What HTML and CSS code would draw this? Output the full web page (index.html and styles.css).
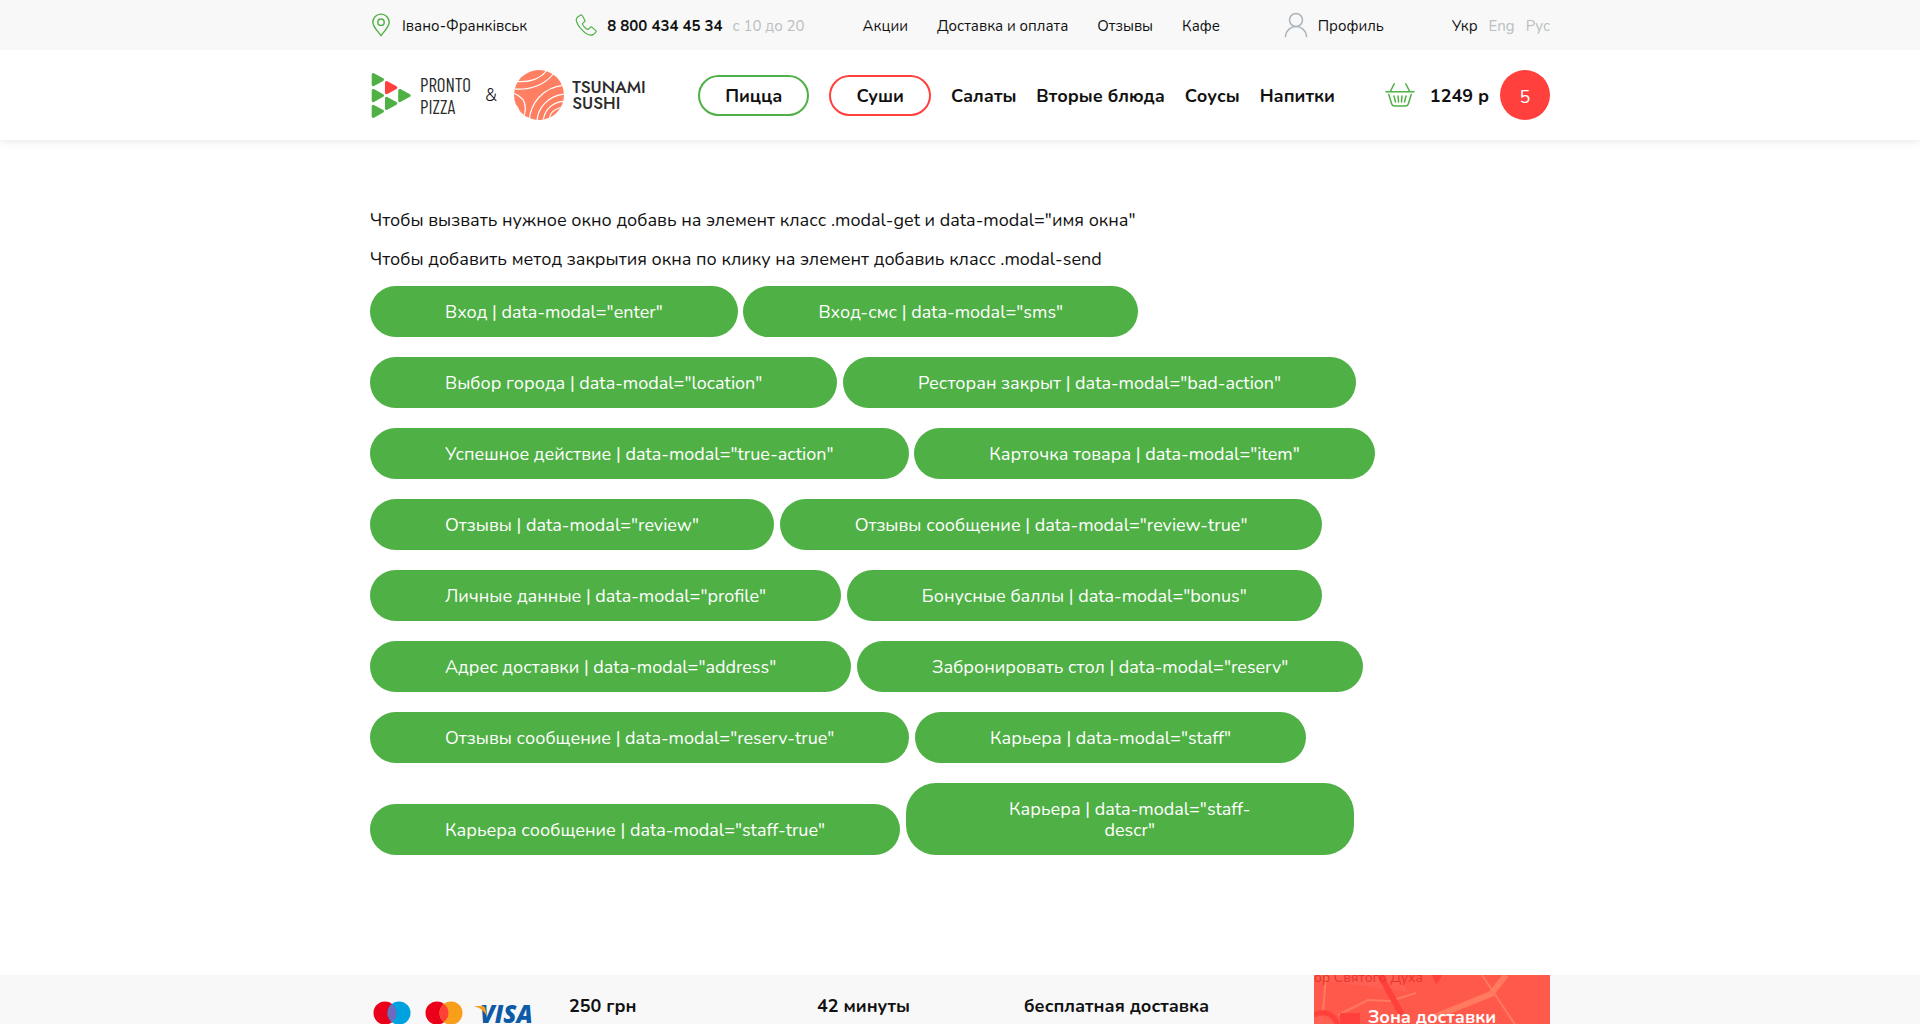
FILE: index.html
```
<!DOCTYPE html>
<html lang="ru">
<head>
<meta charset="utf-8">
<meta name="viewport" content="width=device-width, initial-scale=1">
<title>Pronto Pizza &amp; Tsunami Sushi</title>
<link rel="stylesheet" href="styles.css">
</head>
<body>
<header class="header">
  <div class="topbar">
    <div class="container topbar__row">
      <a class="topbar__item city" href="#">
        <svg width="22" height="24" viewBox="0 0 22 24" fill="none" stroke="#4fb045" stroke-width="1.4"><path d="M11 22.6C8 18.6 2.8 13.8 2.8 9.3a8.2 8.2 0 0 1 16.4 0c0 4.500-5.200 9.300-8.200 13.300z"/><circle cx="11" cy="9.200" r="3.200"/></svg>
        <span>Івано-Франківськ</span>
      </a>
      <div class="topbar__item phone">
        <svg width="22" height="22" viewBox="0 0 22 22" fill="none" stroke="#4fb045" stroke-width="1.200" stroke-linejoin="round"><path d="M5.300 1.200 2.700 2.900C.2 4.700 1 9 5.500 14.300c5 5.600 9.900 7.700 12.700 6.300l2.300-2c.8-.7.8-1.500.1-2.200l-3.500-3c-.7-.6-1.500-.5-2.100.2l-1.400 1.500c-.5.5-1 .5-1.600.1-1.800-1.100-3.200-2.700-4.300-4.500-.4-.6-.3-1.200.2-1.600l1.500-1.300c.7-.6.7-1.300.2-2L7.200 1.500c-.5-.7-1.200-.8-1.900-.3z"/></svg>
        <a class="phone__number" href="tel:88004344534">8 800 434 45 34</a>
        <span class="muted">с 10 до 20</span>
      </div>
      <nav class="topnav">
        <a href="#">Акции</a>
        <a href="#">Доставка и оплата</a>
        <a href="#">Отзывы</a>
        <a href="#">Кафе</a>
      </nav>
      <a class="topbar__item profile" href="#">
        <svg width="24" height="26" viewBox="0 0 24 26" fill="none" stroke="#a9b5bd" stroke-width="1.500"><circle cx="12" cy="8" r="6.500"/><path d="M1.500 25.200V24C2.200 18.200 6.600 14.500 12 14.500S21.800 18.200 22.500 24v1.200"/></svg>
        <span>Профиль</span>
      </a>
      <div class="langs">
        <a href="#">Укр</a>
        <a class="muted" href="#">Eng</a>
        <a class="muted" href="#">Рус</a>
      </div>
    </div>
  </div>
  <div class="container mainbar">
    <a class="logo" href="#">
      <svg width="42" height="50" viewBox="0 0 42 50" fill="#4fb045" stroke="#4fb045" stroke-width="3" stroke-linejoin="round"><path d="M3.200 4.500 12.500 9.600 3.200 14.600zM3.200 20.400 12.500 25.500 3.200 30.600zM3.200 36.200 12.500 41.300 3.200 46.400zM16.500 28.300 25.800 33.400 16.500 38.400zM29.700 20.400 39.200 25.500 29.700 30.600z"/><path fill="#ff403c" stroke="#ff403c" d="M16.500 12.500 25.800 17.600 16.500 22.600z"/></svg>
      <span class="logo__pronto"><span>PRONTO</span><span>PIZZA</span></span>
    </a>
    <span class="logo__and">&amp;</span>
    <a class="logo" href="#">
      <svg width="50" height="50" viewBox="0 0 50 50"><defs><clipPath id="disc"><circle cx="25" cy="25" r="25"/></clipPath></defs><g clip-path="url(#disc)"><path fill="#ff7f63" d="M0 0h50v50H0z"/><g fill="none" stroke="#fff" stroke-width="1.200"><path d="M3 11.500C13 12.500 26 10 33 0M0 19C17 20.500 32 14 40 3M-1 23C8 26 14 33 10 46M-2 33c5 2 7 5 7 10M15 52C16 34 28 17 51 15M23 52c0-14 12-27 28-28M29 52c1-12 9-20 22-21M35 50c1-8 7-12 15-13"/></g></g></svg>
      <span class="logo__tsunami"><span>TSUNAMI</span><span>SUSHI</span></span>
    </a>
    <nav class="menu">
      <a class="menu__pill menu__pill--green" href="#">Пицца</a>
      <a class="menu__pill menu__pill--red" href="#">Суши</a>
      <a href="#">Салаты</a>
      <a href="#">Вторые блюда</a>
      <a href="#">Соусы</a>
      <a href="#">Напитки</a>
    </nav>
    <a class="cart" href="#">
      <svg width="30" height="26" viewBox="0 0 30 26" fill="none" stroke="#4fb045" stroke-width="1.500" stroke-linecap="round"><path d="M1 9.800h28M9.200 1.800 5.300 9.500M20.800 1.800l3.900 7.700M3.800 12.500l2.800 9.300c.4 1.400 1.300 2.200 2.600 2.200h11.600c1.300 0 2.200-.8 2.600-2.200l2.800-9.300M9 14l1.500 6M13 14l.5 6M17 14l-.5 6M21 14l-1.500 6"/></svg>
      <span class="cart__sum">1249 р</span>
      <span class="cart__count">5</span>
    </a>
  </div>
</header>

<main class="container content">
  <p>Чтобы вызвать нужное окно добавь на элемент класс .modal-get и data-modal="имя окна"</p>
  <p>Чтобы добавить метод закрытия окна по клику на элемент добавиь класс .modal-send</p>
  <div class="buttons">
    <button class="button" type="button">Вход | data-modal="enter"</button>
    <button class="button" type="button">Вход-смс | data-modal="sms"</button>
    <button class="button" type="button">Выбор города | data-modal="location"</button>
    <button class="button" type="button">Ресторан закрыт | data-modal="bad-action"</button>
    <button class="button" type="button">Успешное действие | data-modal="true-action"</button>
    <button class="button" type="button">Карточка товара | data-modal="item"</button>
    <button class="button" type="button">Отзывы | data-modal="review"</button>
    <button class="button" type="button">Отзывы сообщение | data-modal="review-true"</button>
    <button class="button" type="button">Личные данные | data-modal="profile"</button>
    <button class="button" type="button">Бонусные баллы | data-modal="bonus"</button>
    <button class="button" type="button">Адрес доставки | data-modal="address"</button>
    <button class="button" type="button">Забронировать стол | data-modal="reserv"</button>
    <button class="button" type="button">Отзывы сообщение | data-modal="reserv-true"</button>
    <button class="button" type="button">Карьера | data-modal="staff"</button>
    <button class="button" type="button">Карьера сообщение | data-modal="staff-true"</button>
    <button class="button button--wrap" type="button">Карьера | data-modal="staff-<br>descr"</button>
  </div>
</main>

<footer class="footer">
  <div class="container footer__row">
    <div class="cards">
      <svg width="40" height="24" viewBox="0 0 40 24"><circle cx="14" cy="12" r="11.500" fill="#eb001b"/><circle cx="28" cy="12" r="11.500" fill="#00a1df"/><path fill="#6c6bbd" d="M21 2.900a11.500 11.500 0 0 1 0 18.200 11.500 11.500 0 0 1 0-18.200z"/></svg>
      <svg width="40" height="24" viewBox="0 0 40 24"><circle cx="14" cy="12" r="11.500" fill="#eb001b"/><circle cx="28" cy="12" r="11.500" fill="#f79e1b"/><path fill="#ff4036" d="M21 2.900a11.500 11.500 0 0 1 0 18.200 11.500 11.500 0 0 1 0-18.200z"/></svg>
      <svg width="58" height="28" viewBox="0 0 58 28"><text x="5" y="22" class="visa">VISA</text><path fill="#f79e1b" d="M0 5h7c2 0 3 1 3.300 2.500L12 15C9 10 5 7 0 5.600z"/></svg>
    </div>
    <b class="fact">250 грн</b>
    <b class="fact">42 минуты</b>
    <b class="fact">бесплатная доставка</b>
    <a class="zone" href="#">
      <svg class="zone__map" viewBox="0 0 236 60" preserveAspectRatio="xMidYMin slice" aria-hidden="true"><path fill="#ff594c" d="M0 0h236v60H0z"/><path fill="#ff6558" d="M0 4 94 17 84 0H0zM0 4v56h40L0 36z" opacity=".6"/><g fill="none" stroke="#ff7a5e" stroke-width="2"><path d="M12 0 9 38M24 40 54 25 76 26 102 18M168 0l40 60"/><path stroke-width="6" d="m120 42 57-23L192 0"/></g><path fill="none" stroke="#ff403c" stroke-width="6" d="m66 0 22 40"/><path fill="none" stroke="#ff403c" stroke-width="5" d="M0 40c10-5 24-2 24 16"/><path fill="#ff403c" d="M26 38h20v12H26zM118 0h10l-3 6-3 3z"/><text class="zone__street" x="0" y="7">ор Святого Духа</text></svg>
      <span class="zone__title">Зона доставки</span>
    </a>
  </div>
</footer>
</body>
</html>
```
FILE: styles.css
```
* { box-sizing: border-box; }

body {
  margin: 0;
  background: #fff;
  color: #111;
  font: 18px/21px Nunito, "Noto Sans", sans-serif;
}

a { color: inherit; text-decoration: none; }
svg { display: block; flex: none; }

.container {
  width: 100%;
  max-width: 1180px;
  margin: 0 auto;
}

.muted { color: #b9c0c0; }

.header { box-shadow: 0 0 10px rgba(0, 0, 0, .12); }

.topbar {
  background: #f8f8f8;
  font-size: 15px;
  line-height: 22px;
}

.topbar__row {
  display: flex;
  align-items: center;
  height: 50px;
}

.topbar__item {
  display: flex;
  align-items: center;
  gap: 10px;
}

.topbar span,
.topbar .phone__number,
.topnav,
.langs { padding-top: 2px; }

.phone { margin-left: 48px; }
.phone__number { font-weight: 700; }
.topnav { display: flex; gap: 29px; margin-left: 58px; }
.profile { margin-left: auto; }
.langs { display: flex; gap: 11px; margin-left: 68px; }

.mainbar {
  display: flex;
  align-items: center;
  height: 90px;
}

.logo { display: flex; align-items: center; color: #2b2b2b; }
.logo span span { display: block; }

.logo__pronto {
  margin-left: 8px;
  padding-top: 2px;
  font: 400 19px/22px "Barlow Condensed", "Bebas Neue", Oswald, sans-serif;
}

.logo__and { margin: 0 17px 0 14px; font-weight: 300; }

.logo__tsunami {
  margin-left: 8px;
  font: 500 17px/16px Jost, "Josefin Sans", Lato, sans-serif;
}

.menu {
  display: flex;
  align-items: center;
  gap: 20px;
  margin-left: auto;
  padding-top: 1px;
  font-weight: 700;
}

.menu a { padding-top: 2px; white-space: nowrap; }

.menu .menu__pill {
  padding: 9px 25px 7px;
  border: 2px solid;
  border-radius: 21px;
}

.menu .menu__pill--green { border-color: #4fb045; }
.menu .menu__pill--red { border-color: #ff403c; }

.cart {
  display: flex;
  align-items: center;
  margin-left: 50px;
  font-weight: 700;
}

.cart__sum { margin-left: 15px; padding-top: 3px; white-space: nowrap; }

.cart__count {
  width: 50px;
  height: 50px;
  margin-left: 11px;
  padding-top: 2px;
  border-radius: 50%;
  background: #ff403c;
  color: #fff;
  font-weight: 400;
  line-height: 50px;
  text-align: center;
}

.content { padding: 52px 0 100px; }
.content p { margin: 18px 0 0; }
.buttons { margin-top: 16px; }

.button {
  margin: 0 1px 20px 0;
  padding: 16px 75px 14px;
  border: 0;
  border-radius: 30px;
  background: #4fb045;
  color: #fff;
  font: inherit;
  vertical-align: bottom;
  cursor: pointer;
}

.button--wrap { min-width: 448px; }

.footer { background: #f8f8f8; }

.footer__row {
  display: grid;
  grid-template-columns: 199px 248px 207px 1fr 236px;
}

.cards { display: flex; gap: 12px; padding: 26px 0 0 1px; }

.visa {
  fill: #0b5ba8;
  font: italic 800 24px "Open Sans", sans-serif;
}

.fact { padding-top: 21px; }

.zone {
  display: grid;
  overflow: hidden;
  color: #fff;
  font-weight: 700;
  text-align: center;
}

.zone > * { grid-area: 1 / 1; }
.zone__map { width: 100%; }
.zone__street { fill: #e8352f; font-size: 14px; font-weight: 400; }
.zone__title { padding-top: 32px; }
```
